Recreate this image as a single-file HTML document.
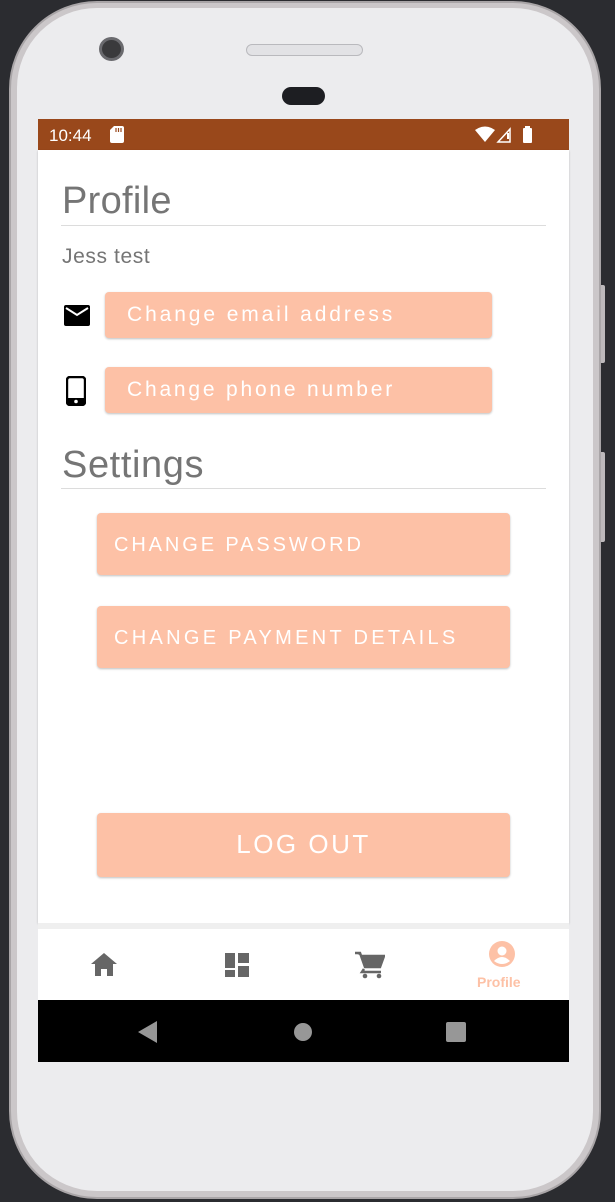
<!DOCTYPE html>
<html><head><meta charset="utf-8"><style>
*{margin:0;padding:0;box-sizing:border-box}
body{width:615px;height:1202px;background:#2b2c30;position:relative;overflow:hidden;font-family:"Liberation Sans",sans-serif}
.a{position:absolute}
.btn{position:absolute;background:#fdc1a6;border-radius:4px;box-shadow:0 1px 2px rgba(0,0,0,.25);color:#fff;letter-spacing:2px;white-space:nowrap}
.hr{position:absolute;left:61px;width:485px;height:1px;background:#dcdcdc}
</style></head><body>
<div class="a" style="left:598px;top:285px;width:7px;height:78px;background:#bdb9bb;border-radius:2px"></div>
<div class="a" style="left:598px;top:452px;width:7px;height:90px;background:#bdb9bb;border-radius:2px"></div>
<div class="a" style="left:9px;top:1px;width:592px;height:1198px;border-radius:88px;background:#cbc7c9;border:2px solid #a9a5a7"></div>
<div class="a" style="left:17px;top:8px;width:576px;height:1183px;border-radius:80px;background:#ececee"></div>
<div class="a" style="left:99px;top:37px;width:25px;height:24px;border-radius:50%;background:#3a3a3c;border:3px solid #6a6a6e"></div>
<div class="a" style="left:246px;top:44px;width:117px;height:12px;border-radius:6px;background:#e2e2e5;border:1px solid #b9b9bd"></div>
<div class="a" style="left:282px;top:87px;width:43px;height:18px;border-radius:9px;background:#1d1e22"></div>
<!-- status bar -->
<div class="a" style="left:38px;top:119px;width:531px;height:31px;background:#99481b"></div>
<div class="a" style="left:49px;top:126px;color:#fff;font-size:17px">10:44</div>
<svg class="a" style="left:110px;top:126px" width="14" height="17" viewBox="0 0 14 17"><path d="M4 0H12a2 2 0 0 1 2 2V15a2 2 0 0 1-2 2H2a2 2 0 0 1-2-2V4Z" fill="#fff"/><path d="M6 2v4M8.5 2v4M11 2v4" stroke="#99481b" stroke-width="1.2"/></svg>
<svg class="a" style="left:475px;top:126px" width="60" height="17" viewBox="0 0 60 17"><path d="M0 4Q10-3 20 4L10 16Z" fill="#fff"/><path d="M23 16L35 3V16Z" fill="none" stroke="#fff" stroke-width="1.5"/><rect x="32" y="7" width="2" height="6" fill="#fff"/><rect x="48" y="2" width="9" height="15" rx="1" fill="#fff"/><rect x="50" y="0" width="5" height="3" fill="#fff"/></svg>
<!-- content -->
<div class="a" style="left:38px;top:150px;width:531px;height:773px;background:#fff;box-shadow:0 1px 2px rgba(0,0,0,.2)"></div>
<div class="a" style="left:38px;top:923px;width:531px;height:6px;background:#efefef"></div>
<div class="a" style="left:62px;top:180px;font-size:38px;color:#757575;letter-spacing:0.3px">Profile</div>
<div class="hr" style="top:225px"></div>
<div class="a" style="left:62px;top:245px;font-size:21px;color:#757575;letter-spacing:0.6px">Jess test</div>
<svg class="a" style="left:64px;top:305px" width="26" height="21" viewBox="0 0 26 21"><rect width="26" height="21" rx="2" fill="#000"/><path d="M2 3l11 7 11-7" fill="none" stroke="#fff" stroke-width="2"/></svg>
<svg class="a" style="left:66px;top:376px" width="20" height="30" viewBox="0 0 20 30"><rect x="1" y="1" width="18" height="28" rx="3" fill="none" stroke="#000" stroke-width="2.4"/><rect x="1" y="22" width="18" height="7" fill="#000"/><circle cx="10" cy="25.5" r="1.8" fill="#fff"/></svg>
<div class="btn" style="left:105px;top:292px;width:387px;height:46px;font-size:21px;padding:11px 0 0 22px;letter-spacing:2.9px">Change email address</div>
<div class="btn" style="left:105px;top:367px;width:387px;height:46px;font-size:21px;padding:11px 0 0 22px;letter-spacing:2.8px">Change phone number</div>
<div class="a" style="left:62px;top:444px;font-size:38px;color:#757575;letter-spacing:0.6px">Settings</div>
<div class="hr" style="top:488px"></div>
<div class="btn" style="left:97px;top:513px;width:413px;height:62px;font-size:20px;padding:21px 0 0 17px;letter-spacing:2.9px">CHANGE PASSWORD</div>
<div class="btn" style="left:97px;top:606px;width:413px;height:62px;font-size:20px;padding:21px 0 0 17px;letter-spacing:3.3px">CHANGE PAYMENT DETAILS</div>
<div class="btn" style="left:97px;top:813px;width:413px;height:64px;font-size:26px;text-align:center;padding-top:16px;letter-spacing:2.5px">LOG OUT</div>
<!-- bottom nav -->
<div class="a" style="left:38px;top:929px;width:531px;height:71px;background:#fff"></div>
<svg class="a" style="left:91px;top:953px" width="26" height="23" viewBox="0 0 26 23"><path d="M13 0L0 11h4v12h6v-7h6v7h6V11h4Z" fill="#666"/></svg>
<svg class="a" style="left:225px;top:953px" width="24" height="24" viewBox="0 0 24 24"><rect x="0" y="0" width="10" height="24" fill="#666"/><rect x="13" y="0" width="11" height="10" fill="#666"/><rect x="13" y="13" width="11" height="11" fill="#666"/><rect x="0" y="15" width="10" height="2" fill="#fff"/></svg>
<svg class="a" style="left:355px;top:951px" width="30" height="28" viewBox="0 0 30 28"><path d="M0 2h5l5 14h15l4-11H7" fill="#666" stroke="#666" stroke-width="2.5"/><path d="M9 18l-2 3h19" stroke="#666" stroke-width="2.5" fill="none"/><circle cx="10" cy="25" r="2.3" fill="#666"/><circle cx="24" cy="25" r="2.3" fill="#666"/></svg>
<svg class="a" style="left:489px;top:941px" width="26" height="26" viewBox="0 0 26 26"><circle cx="13" cy="13" r="13" fill="#fdc1a6"/><circle cx="13" cy="10" r="4.5" fill="#fff"/><path d="M5 20q8-8 16 0q-8 6-16 0Z" fill="#fff"/></svg>
<div class="a" style="left:477px;top:974px;font-size:14px;font-weight:bold;color:#fdc1a6">Profile</div>
<!-- android nav -->
<div class="a" style="left:38px;top:1000px;width:531px;height:62px;background:#000"></div>
<svg class="a" style="left:138px;top:1021px" width="20" height="22"><path d="M19 0V22L0 11Z" fill="#979797"/></svg>
<div class="a" style="left:294px;top:1023px;width:18px;height:18px;border-radius:50%;background:#979797"></div>
<div class="a" style="left:446px;top:1022px;width:20px;height:20px;border-radius:2px;background:#979797"></div>
</body></html>
